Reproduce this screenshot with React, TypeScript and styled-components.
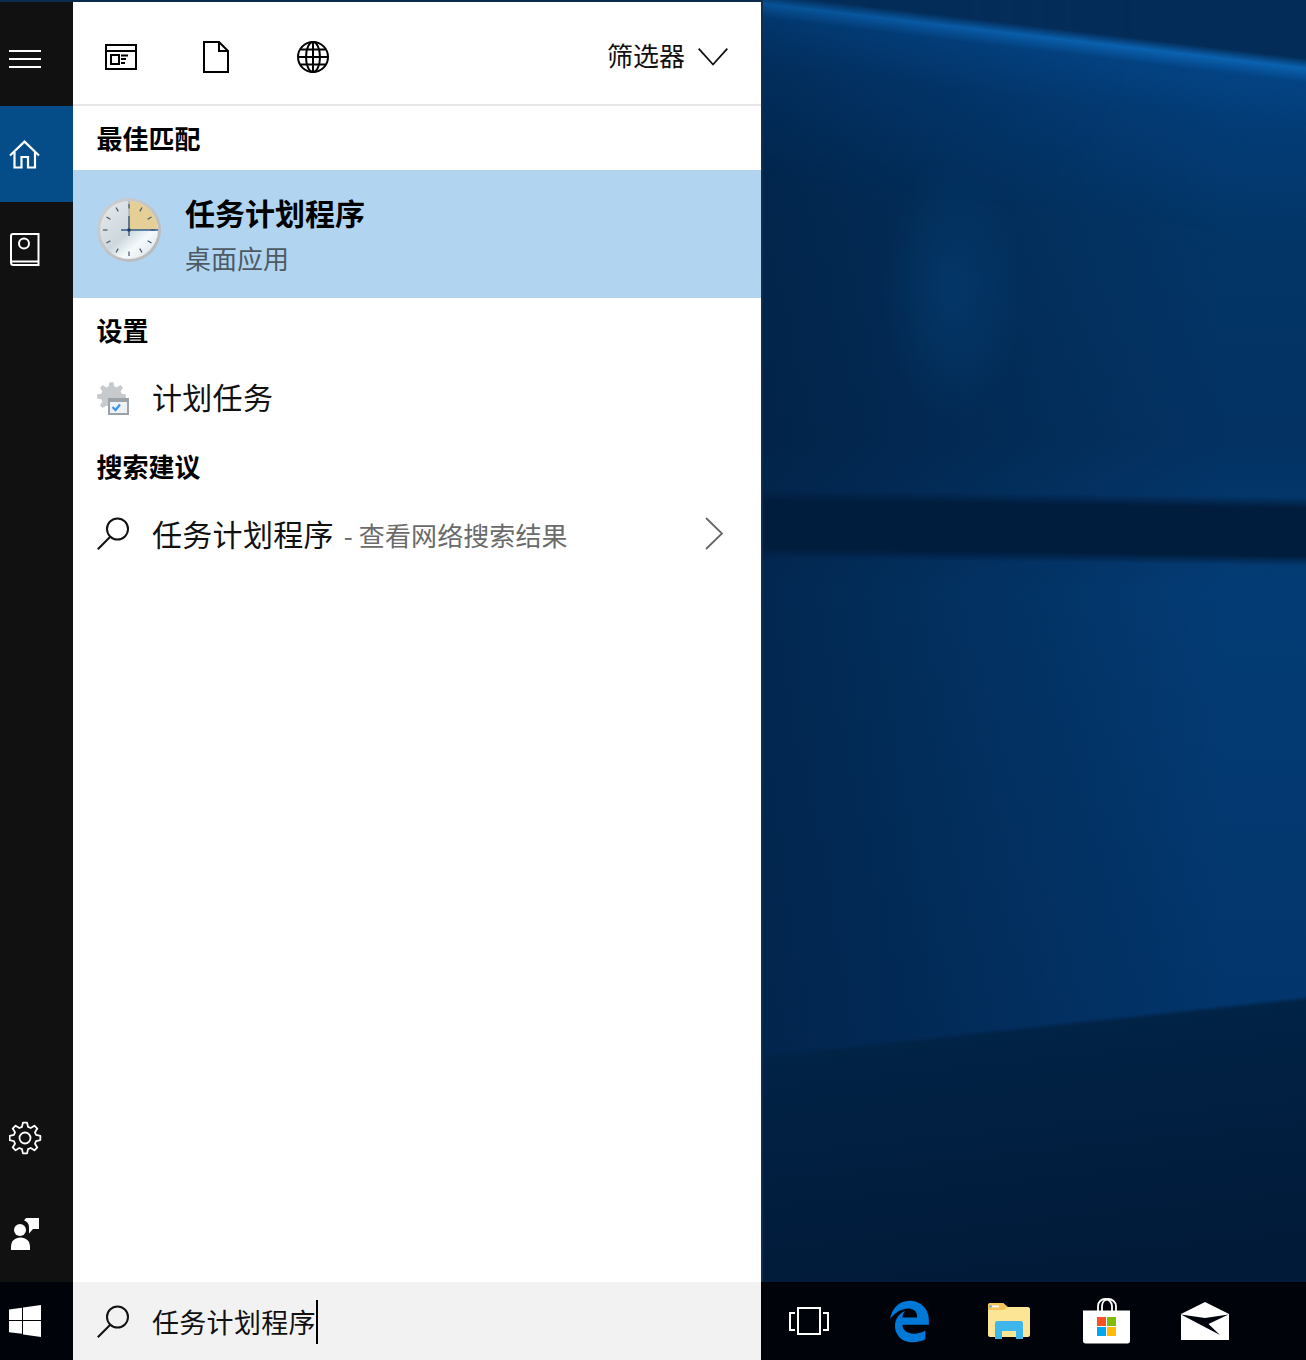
import React from "react";
import styled, { createGlobalStyle } from "styled-components";
import { FaEdgeLegacy } from "react-icons/fa6";

const Global = createGlobalStyle`
  html, body { margin: 0; padding: 0; background: #02264c; }
  * { box-sizing: border-box; }
  body { font-family: "Noto Sans CJK SC", "Noto Sans", sans-serif; }
`;

const Screen = styled.div`
  width: 1306px;
  height: 1360px;
  display: flex;
  flex-direction: column;
  overflow: hidden;
  background: #0a2a4f;
`;
const Upper = styled.div`
  flex: 1;
  display: flex;
  min-height: 0;
`;
const StartColumn = styled.div`
  width: 761px;
  display: flex;
  padding-top: 2px;
  background: #0c2a4c;
`;
const Rail = styled.nav`
  width: 73px;
  background: #111111;
  display: flex;
  flex-direction: column;
`;
const RailItem = styled.div<{ $active?: boolean; $tall?: boolean }>`
  height: ${(p) => (p.$tall ? 104 : 96)}px;
  display: flex;
  align-items: center;
  padding-left: 9px;
  padding-top: ${(p) => (p.$tall ? 10 : 0)}px;
  background: ${(p) => (p.$active ? "#054d89" : "transparent")};
`;
const RailSpacer = styled.div`
  flex: 1;
`;
const Panel = styled.main`
  flex: 1;
  background: #ffffff;
  display: flex;
  flex-direction: column;
`;
const Filters = styled.header`
  height: 104px;
  border-bottom: 2px solid #e6e6e6;
  display: flex;
  align-items: center;
  padding: 8px 33px 0 32px;
`;
const FilterTab = styled.div<{ $w: number }>`
  width: ${(p) => p.$w}px;
  display: flex;
  align-items: center;
`;
const FilterMenu = styled.div`
  margin-left: auto;
  display: flex;
  align-items: center;
  gap: 13px;
  font-size: 26px;
  line-height: 36px;
  color: #111;
`;
const FilterLabel = styled.span`
  margin-bottom: 4px;
`;
const FilterCaret = styled.span`
  display: flex;
`;
const Heading = styled.h2<{ $h: number }>`
  margin: 0;
  height: ${(p) => p.$h}px;
  padding: 0 0 2px 23.5px;
  display: flex;
  align-items: center;
  font-size: 26px;
  font-weight: 700;
  color: #000;
`;
const BestMatch = styled.div`
  height: 128px;
  background: #b1d5f1;
  display: flex;
  align-items: center;
  padding-left: 24px;
  gap: 24px;
`;
const ClockSlot = styled.div`
  display: flex;
  margin-bottom: 8px;
`;
const BestText = styled.div`
  display: flex;
  flex-direction: column;
  padding-top: 2px;
`;
const BestTitle = styled.div`
  font-size: 30px;
  line-height: 44px;
  font-weight: 700;
  color: #000;
`;
const BestSub = styled.div`
  font-size: 26px;
  line-height: 44px;
  margin-top: 2px;
  color: #4d5a64;
`;
const Row = styled.div<{ $h: number }>`
  height: ${(p) => p.$h}px;
  display: flex;
  align-items: center;
  padding-left: 24px;
  gap: 22px;
  font-size: 30px;
  letter-spacing: 0.3px;
  color: #111;
`;
const RowIconSlot = styled.div`
  display: flex;
  margin-top: 4px;
`;
const Hint = styled.span`
  font-size: 26px;
  letter-spacing: 0.1px;
  color: #6b6b6b;
  margin-left: 10px;
`;
const RowEnd = styled.span`
  margin-left: auto;
  margin-right: 38px;
  display: flex;
`;
const Wallpaper = styled.div`
  flex: 1;
  position: relative;
  border-left: 2px solid #0f2f50;
  background:
    linear-gradient(173.9deg, transparent 1048px, #012346 1053px, #011f41 1150px, #011a38 1300px),
    linear-gradient(180.8deg, transparent 497px, #011d3e 508px, #011d3e 556px, transparent 566px),
    radial-gradient(ellipse 70px 130px at 190px 290px, rgba(5, 72, 132, 0.4), transparent),
    linear-gradient(90deg, rgba(1, 26, 56, 0.6) 0, rgba(1, 26, 56, 0.32) 40%, transparent 85%),
    linear-gradient(180deg, #033c78 70px, #033668 220px, #033263 440px, #033c75 590px, #033a72 700px, #02346a 1060px);

  &::before {
    content: "";
    position: absolute;
    inset: 0;
    background: linear-gradient(
      186.8deg,
      #042c58 0,
      #042c58 58px,
      #0a62b0 68px,
      rgba(4, 70, 136, 0.7) 82px,
      rgba(4, 66, 128, 0.3) 130px,
      transparent 240px
    );
    mask-image: linear-gradient(90deg, rgba(0, 0, 0, 0.72), #000 70%);
  }
`;
const Taskbar = styled.footer`
  height: 78px;
  display: flex;
  background: #00030a;
`;
const Start = styled.div`
  width: 73px;
  display: flex;
  align-items: center;
  padding-left: 9px;
`;
const SearchBox = styled.div`
  width: 688px;
  background: #f2f2f2;
  display: flex;
  align-items: center;
  padding-left: 24px;
  gap: 22px;
`;
const SearchText = styled.div`
  font-size: 27px;
  letter-spacing: 0.3px;
  line-height: 44px;
  color: #111;
  border-right: 2px solid #000;
  height: 44px;
  margin-top: 2px;
`;
const Tray = styled.div`
  flex: 1;
  display: flex;
  align-items: center;
  padding-left: 28px;
`;
const TrayIcon = styled.div<{ $w: number }>`
  width: ${(p) => p.$w}px;
  display: flex;
  align-items: center;
`;
const EdgeIcon = styled(FaEdgeLegacy)`
  color: #0078d7;
  display: block;
`;
const IconSvg = styled.svg`
  display: block;
  flex: none;
`;

function gearPath(cx: number, cy: number, outer: number, inner: number, teeth = 8) {
  const step = 360 / teeth;
  const pts: string[] = [];
  const at = (deg: number, r: number) => {
    const a = ((deg - 90) * Math.PI) / 180;
    return `${(cx + r * Math.cos(a)).toFixed(2)} ${(cy + r * Math.sin(a)).toFixed(2)}`;
  };
  for (let i = 0; i < teeth; i++) {
    const c = i * step;
    pts.push(at(c - step * 0.34, inner), at(c - step * 0.17, outer), at(c + step * 0.17, outer), at(c + step * 0.34, inner));
  }
  return `M${pts.join("L")}Z`;
}

const Hamburger = () => (
  <IconSvg width="32" height="18" viewBox="0 0 32 18" fill="#fff">
    <rect y="0" width="32" height="2" />
    <rect y="8" width="32" height="2" />
    <rect y="16" width="32" height="2" />
  </IconSvg>
);
const Home = () => (
  <IconSvg width="32" height="30" viewBox="-1 -1 32 30" fill="none" stroke="#fff" strokeWidth="2.200">
    <path d="M0 15.500 14.500 1.600 29 15.500" />
    <path d="M4.500 12v15.500h7V17h6.500v10.500h7V12" />
  </IconSvg>
);
const Book = () => (
  <IconSvg width="32" height="34" viewBox="-1 0 32 34" fill="none" stroke="#fff" strokeWidth="2">
    <path d="M3 1h25.500v31H3.500C1.500 32 1 31 1 29.500V3c0-1.200 1-2 2-2Z" />
    <path d="M1 28.500h27.500" />
    <circle cx="14" cy="10.500" r="5" />
  </IconSvg>
);
const Gear = () => (
  <IconSvg width="34" height="34" viewBox="0 0 34 34" fill="none" stroke="#fff" strokeWidth="1.800" strokeLinejoin="round">
    <path d={gearPath(16, 17, 15.500, 11.500)} />
    <circle cx="16" cy="17" r="5.500" />
  </IconSvg>
);
const Feedback = () => (
  <IconSvg width="32" height="34" viewBox="0 0 32 34" fill="#fff">
    <path d="M17 1h13v11h-6l-4 4.500V10.500C20 7.500 19 5 15 3.500Z" />
    <circle cx="11" cy="13" r="6" />
    <path d="M2 33v-3c0-6 4-9.500 9.500-9.500S21 24 21 30v3Z" />
  </IconSvg>
);
const News = () => (
  <IconSvg width="32" height="26" viewBox="0 0 32 26" fill="none" stroke="#000" strokeWidth="2">
    <rect x="1" y="1" width="30" height="24" />
    <path d="M1 7h30" />
    <rect x="6" y="11" width="8" height="9" />
    <path d="M16 11.500h7M16 15h5M16 19h4" />
  </IconSvg>
);
const Doc = () => (
  <IconSvg width="26" height="32" viewBox="0 0 26 32" fill="none" stroke="#000" strokeWidth="2">
    <path d="M1 1h15l9 9v21H1Z" />
    <path d="M16 1v9h9" />
  </IconSvg>
);
const Globe = () => (
  <IconSvg width="32" height="32" viewBox="0 0 32 32" fill="none" stroke="#000" strokeWidth="2">
    <circle cx="16" cy="16" r="15" />
    <ellipse cx="16" cy="16" rx="7" ry="15" />
    <path d="M16 1v30M1 16h30M3.500 8.500h25M3.500 23.500h25" />
  </IconSvg>
);
const ChevronDown = () => (
  <IconSvg width="30" height="18" viewBox="0 0 30 18" fill="none" stroke="#111" strokeWidth="1.800">
    <path d="M.7.7 15 16.500 29.300.7" />
  </IconSvg>
);
const ChevronRight = () => (
  <IconSvg width="18" height="33" viewBox="0 0 18 33" fill="none" stroke="#666" strokeWidth="1.800">
    <path d="M1 1 17 16.500 1 32" />
  </IconSvg>
);
const SearchGlass = () => (
  <IconSvg width="33" height="33" viewBox="0 0 33 33" fill="none" stroke="#111" strokeWidth="2">
    <circle cx="20.500" cy="12" r="10.500" />
    <path d="M13 20 .8 32.200" />
  </IconSvg>
);
const ticks = [0, 30, 60, 90, 120, 150, 180, 210, 240, 270, 300, 330];
const Clock = () => (
  <IconSvg width="64" height="64" viewBox="0 0 64 64">
    <defs>
      <linearGradient id="face" x1="0.1" y1="0.1" x2="0.8" y2="0.9">
        <stop offset="0" stopColor="#e2e6e9" />
        <stop offset="0.55" stopColor="#cdd8dd" />
        <stop offset="0.8" stopColor="#f4fafc" />
        <stop offset="1" stopColor="#e4eaee" />
      </linearGradient>
      <linearGradient id="rim" x1="0" y1="0" x2="1" y2="1">
        <stop offset="0" stopColor="#cfd0d2" />
        <stop offset="1" stopColor="#b4b7ba" />
      </linearGradient>
    </defs>
    <circle cx="32" cy="32" r="32" fill="url(#rim)" />
    <circle cx="32" cy="32" r="29" fill="url(#face)" />
    <path d="M32 32V3A29 29 0 0 1 61 32Z" fill="#e5cf97" />
    <path d="M32 3V32" fill="none" stroke="#8c949a" strokeWidth="0.800" />
    {ticks.map((a) => (
      <rect key={a} x="31.400" y="6" width="1.200" height="4.500" fill="#46586a" transform={`rotate(${a} 32 32)`} />
    ))}
    <path d="M32 18v20" stroke="#33506f" strokeWidth="1.300" />
    <path d="M24 32h37" stroke="#2f5b8c" strokeWidth="1.300" />
    <circle cx="32" cy="32" r="1.800" fill="#223c5c" />
  </IconSvg>
);
const SettingsTask = () => (
  <IconSvg width="33" height="33" viewBox="0 0 33 33">
    <path d={gearPath(14.500, 14.500, 14.500, 10.500)} fill="#c6cacd" />
    <rect x="11" y="16" width="21" height="17" fill="#9ca3a8" />
    <rect x="13" y="20" width="17" height="11" fill="#eef2f6" />
    <path d="m15.500 25 3 3 4.500-5.500" fill="none" stroke="#3d95e6" strokeWidth="2.200" />
  </IconSvg>
);
const Windows = () => (
  <IconSvg width="32" height="34" viewBox="0 0 32 34" fill="#fff">
    <path d="M0 5.500 13 3.700V16H0ZM14 3.500 32 1v15H14ZM0 17h13v12.800L0 28.200ZM14 17h18v16l-18-2.500Z" />
  </IconSvg>
);
const TaskView = () => (
  <IconSvg width="40" height="28" viewBox="0 0 40 28" fill="none" stroke="#fff" strokeWidth="2">
    <rect x="9" y="1" width="22" height="26" />
    <path d="M6 6H1v17h5M34 6h5v17h-5" />
  </IconSvg>
);
const Explorer = () => (
  <IconSvg width="42" height="36" viewBox="0 0 42 36">
    <path d="M0 2c0-1 1-2 2-2h13l4 4h21c1 0 2 1 2 2v26c0 1-1 2-2 2H2c-1 0-2-1-2-2Z" fill="#fce594" />
    <path d="M0 2c0-1 1-2 2-2h13l5 4-4 3H0Z" fill="#f6c65a" />
    <rect x="4" y="2.500" width="7" height="1.800" fill="#fff" />
    <rect x="1.500" y="2.500" width="2" height="1.800" fill="#37a6e6" />
    <path d="M7 36V20c0-1 1-2 2-2h24c1 0 2 1 2 2v16h-7v-8H14v8Z" fill="#3db7eb" />
  </IconSvg>
);
const Store = () => (
  <IconSvg width="47" height="46" viewBox="0 0 47 46">
    <path d="M15 14V8c0-4 3.500-7 7-7s7 3 7 7v6" fill="none" stroke="#fff" strokeWidth="1.800" />
    <path d="M19 14V8c0-4 3-7 6.500-7S33 4 33 8v6" fill="none" stroke="#fff" strokeWidth="1.800" />
    <path d="M0 12.500h47V43c0 1.500-1 2.500-2.500 2.500h-42C1 45.500 0 44.500 0 43Z" fill="#fff" />
    <rect x="14" y="19" width="9" height="9" fill="#f35325" />
    <rect x="24" y="19" width="9" height="9" fill="#81bc06" />
    <rect x="14" y="29" width="9" height="9" fill="#05a6f0" />
    <rect x="24" y="29" width="9" height="9" fill="#ffba08" />
  </IconSvg>
);
const Mail = () => (
  <IconSvg width="48" height="38" viewBox="0 0 48 38">
    <path d="M24 0 48 12V38H0V12Z" fill="#fff" />
    <path d="M0 12.500 24 16 47.500 12.500 27.500 22 39 33Z" fill="#00030a" />
  </IconSvg>
);

export default function App() {
  return (
    <Screen>
      <Global />
      <Upper>
        <StartColumn>
          <Rail>
            <RailItem $tall><Hamburger /></RailItem>
            <RailItem $active><Home /></RailItem>
            <RailItem><Book /></RailItem>
            <RailSpacer />
            <RailItem><Gear /></RailItem>
            <RailItem><Feedback /></RailItem>
          </Rail>
          <Panel>
            <Filters>
              <FilterTab $w={98}><News /></FilterTab>
              <FilterTab $w={94}><Doc /></FilterTab>
              <FilterTab $w={40}><Globe /></FilterTab>
              <FilterMenu>
                <FilterLabel>筛选器</FilterLabel>
                <FilterCaret><ChevronDown /></FilterCaret>
              </FilterMenu>
            </Filters>
            <Heading $h={64}>最佳匹配</Heading>
            <BestMatch>
              <ClockSlot><Clock /></ClockSlot>
              <BestText>
                <BestTitle>任务计划程序</BestTitle>
                <BestSub>桌面应用</BestSub>
              </BestText>
            </BestMatch>
            <Heading $h={64}>设置</Heading>
            <Row $h={68}>
              <RowIconSlot><SettingsTask /></RowIconSlot>
              计划任务
            </Row>
            <Heading $h={72}>搜索建议</Heading>
            <Row $h={62}>
              <SearchGlass />
              <span>
                任务计划程序
                <Hint>- 查看网络搜索结果</Hint>
              </span>
              <RowEnd><ChevronRight /></RowEnd>
            </Row>
          </Panel>
        </StartColumn>
        <Wallpaper />
      </Upper>
      <Taskbar>
        <Start><Windows /></Start>
        <SearchBox>
          <SearchGlass />
          <SearchText>任务计划程序</SearchText>
        </SearchBox>
        <Tray>
          <TrayIcon $w={99}><TaskView /></TrayIcon>
          <TrayIcon $w={100}><EdgeIcon size={43} /></TrayIcon>
          <TrayIcon $w={95}><Explorer /></TrayIcon>
          <TrayIcon $w={98}><Store /></TrayIcon>
          <TrayIcon $w={48}><Mail /></TrayIcon>
        </Tray>
      </Taskbar>
    </Screen>
  );
}
